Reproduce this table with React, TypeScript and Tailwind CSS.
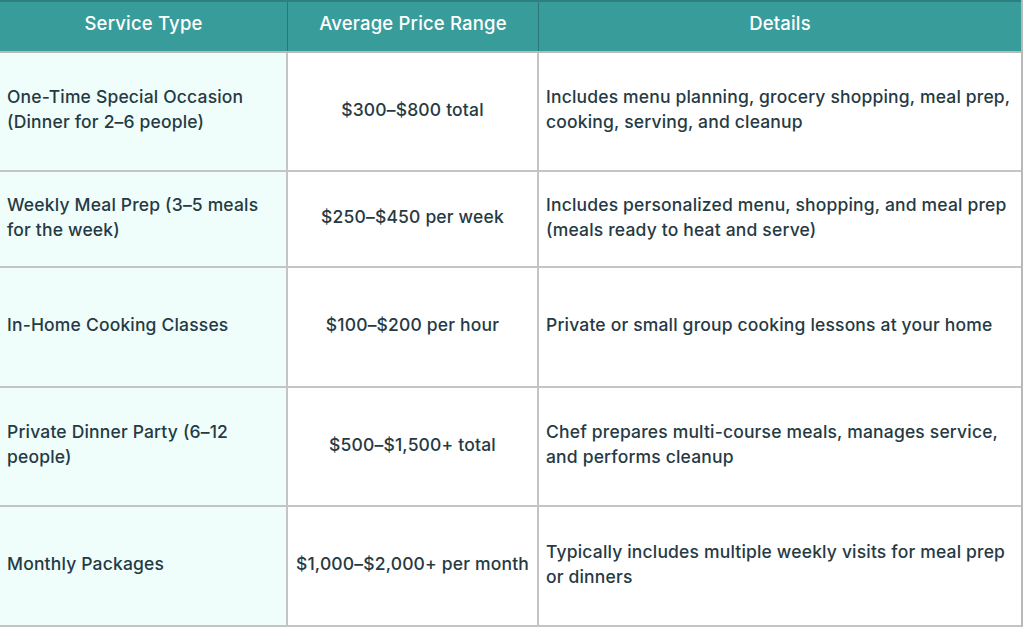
import React from "react";

type Row = { service: string; price: string; details: string; h: string };

const rows: Row[] = [
  {
    service: "One-Time Special Occasion (Dinner for 2–6 people)",
    price: "$300–$800 total",
    details: "Includes menu planning, grocery shopping, meal prep, cooking, serving, and cleanup",
    h: "h-[119px]",
  },
  {
    service: "Weekly Meal Prep (3–5 meals for the week)",
    price: "$250–$450 per week",
    details: "Includes personalized menu, shopping, and meal prep (meals ready to heat and serve)",
    h: "h-[96px]",
  },
  {
    service: "In-Home Cooking Classes",
    price: "$100–$200 per hour",
    details: "Private or small group cooking lessons at your home",
    h: "h-[120px]",
  },
  {
    service: "Private Dinner Party (6–12 people)",
    price: "$500–$1,500+ total",
    details: "Chef prepares multi-course meals, manages service, and performs cleanup",
    h: "h-[119px]",
  },
  {
    service: "Monthly Packages",
    price: "$1,000–$2,000+ per month",
    details: "Typically includes multiple weekly visits for meal prep or dinners",
    h: "h-[120px]",
  },
];

export default function App() {
  return (
    <div className="w-[1023px] h-[627px] bg-white font-['Inter','Liberation_Sans',sans-serif] text-[#263a44]">
      <div className="w-[1023px] border-r-2 border-[#b9b9b9]">
        {/* header */}
        <div className="grid grid-cols-[288px_251px_1fr] h-[53px] bg-[#389c9b] border-t-2 border-[#2d7f7d] border-b-2 border-b-[#b9b9b9] text-white text-[18.5px] font-medium tracking-[0.01em]">
          <div className="flex items-center justify-center pb-[5px] border-r border-[#2c7775]">Service Type</div>
          <div className="flex items-center justify-center pb-[5px] border-r border-[#2c7775]">Average Price Range</div>
          <div className="flex items-center justify-center pb-[5px]">Details</div>
        </div>
        {rows.map((r, i) => (
          <div
            key={i}
            className={`grid grid-cols-[288px_251px_1fr] ${r.h} text-[17.5px] font-medium tracking-[0.01em] leading-[25px] border-b-2 border-[#c4c4c4]`}
          >
            <div className="flex items-center bg-[#effefb] pl-[7px] pr-2 pb-[5px] border-r-2 border-[#c4c4c4]">
              {r.service}
            </div>
            <div className="flex items-center justify-center px-1 pb-[5px] border-r-2 border-[#c4c4c4]">
              {r.price}
            </div>
            <div className="flex items-center pl-[7px] pr-2 pb-[5px]">{r.details}</div>
          </div>
        ))}
      </div>
    </div>
  );
}
